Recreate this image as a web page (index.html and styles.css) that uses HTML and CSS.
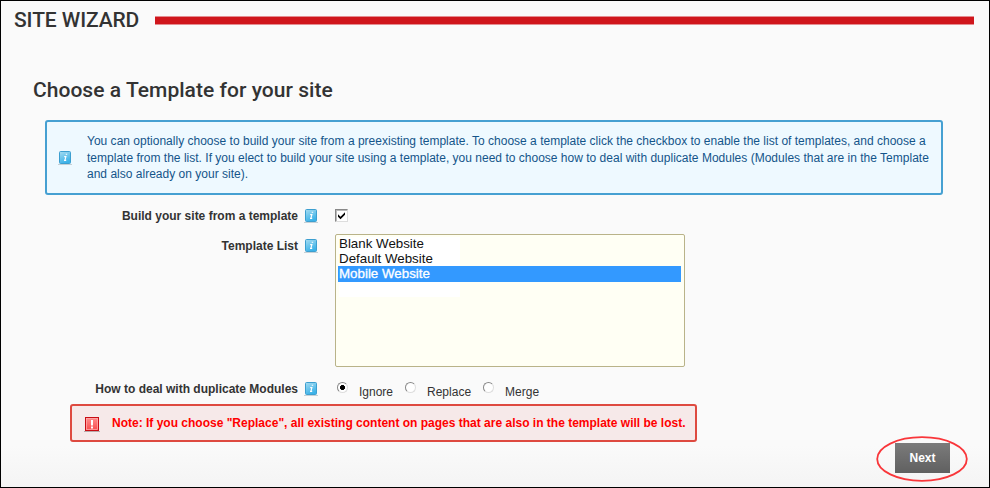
FILE: index.html
```html
<!DOCTYPE html>
<html lang="en">
<head>
<meta charset="utf-8">
<title>Site Wizard</title>
<link rel="stylesheet" href="styles.css">
</head>
<body>
<svg class="defs" width="0" height="0" aria-hidden="true">
  <defs>
    <linearGradient id="blue" x1="0" y1="0" x2="0.4" y2="1"><stop offset="0" stop-color="#a6dcf1"/><stop offset="1" stop-color="#3cb2e8"/></linearGradient>
    <linearGradient id="red" x1="0" y1="0" x2="0" y2="1"><stop offset="0" stop-color="#ff8d8d"/><stop offset="1" stop-color="#f94b4b"/></linearGradient>
    <symbol id="info" viewBox="0 0 14 15">
      <path d="M0 13.5h14" stroke="#c5d0d6"/>
      <rect x="1.5" y="0.5" width="11" height="12" rx="1" fill="url(#blue)" stroke="#3c9fd0"/>
      <path d="M7.7 3.3h1.5M6.2 5.6h1.7L6.9 9.4M6 9.4h2.2" stroke="#fff" stroke-width="1.1" fill="none"/>
    </symbol>
  </defs>
</svg>
<main class="page">
  <header class="top"><h1>SITE WIZARD</h1><div class="bar"></div></header>
  <h2>Choose a Template for your site</h2>
  <section class="info">
    <svg class="icon"><use href="#info"/></svg>
    <p>You can optionally choose to build your site from a preexisting template. To choose a template click the checkbox to enable the list of templates, and choose a<br>template from the list. If you elect to build your site using a template, you need to choose how to deal with duplicate Modules (Modules that are in the Template<br>and also already on your site).</p>
  </section>
  <div class="form">
    <div class="row build">
      <span class="label">Build your site from a template</span>
      <svg class="icon"><use href="#info"/></svg>
      <span class="check"><svg width="9" height="9"><path d="M1 3.2v2.5l2.5 2.5L8 3.7V1.2L3.5 5.7z" fill="#000"/></svg></span>
    </div>
    <div class="row list-row">
      <span class="label">Template List</span>
      <svg class="icon"><use href="#info"/></svg>
      <ul class="list"><li>Blank Website</li><li>Default Website</li><li class="selected">Mobile Website</li></ul>
    </div>
    <div class="row modules">
      <span class="label">How to deal with duplicate Modules</span>
      <svg class="icon"><use href="#info"/></svg>
      <div class="radios">
        <span class="radio on"></span><span class="choice">Ignore</span>
        <span class="radio"></span><span class="choice">Replace</span>
        <span class="radio"></span><span class="choice">Merge</span>
      </div>
    </div>
  </div>
  <section class="note">
    <svg width="16" height="16"><path d="M0 14.5h16" stroke="#b9a9a9"/><rect x="1.5" y="0.5" width="13" height="13" fill="url(#red)" stroke="#c80d14"/><rect x="2.5" y="1.5" width="11" height="11" fill="none" stroke="#ffb0b0" stroke-width=".7"/><path d="M8 3v5.5M8 9.5v2" stroke="#fff" stroke-width="2"/></svg>
    <span>Note: If you choose "Replace", all existing content on pages that are also in the template will be lost.</span>
  </section>
  <footer class="actions">
    <div class="next">Next
      <svg class="ring" width="94" height="48"><ellipse cx="47" cy="24" rx="44.8" ry="21.8" fill="none" stroke="#f9363a" stroke-width="1.8"/></svg>
    </div>
  </footer>
</main>
</body>
</html>
```
FILE: styles.css
```css
* { box-sizing: border-box; }
body { margin: 0; font: 12px/16.5px "Liberation Sans", Arial, sans-serif; color: #333; }
.defs { position: absolute; }
.page { width: 990px; height: 488px; border: 1px solid #000; overflow: hidden; background: linear-gradient(#fafafa 0 445px, #f4f4f4 100%); }
h1, h2 { margin: 0; font-family: Roboto, sans-serif; font-weight: 500; font-size: 21px; line-height: 26px; white-space: nowrap; }
.top { display: flex; align-items: center; height: 38px; padding: 0 15px 0 13px; }
h1 { width: 141px; letter-spacing: -.1px; }
.bar { flex: 1; height: 9px; background: #d0161c; border: solid #e58d91; border-width: 1px 0; }
h2 { margin: 38px 0 0 32px; letter-spacing: .04px; }
.info { display: flex; align-items: flex-start; width: 898px; height: 75px; margin: 17px 0 0 44px; padding: 11px 0 0 11px; background: #eef9ff; border: 2px solid #46a0d2; border-radius: 3px; color: #14558a; }
.icon { width: 14px; height: 15px; flex: none; }
.info .icon { margin-top: 18px; }
.info p { margin: 0 0 0 15px; white-space: nowrap; letter-spacing: .01px; }
.row { display: flex; align-items: flex-start; }
.label { width: 297px; text-align: right; font-weight: bold; white-space: nowrap; }
.row .icon { margin: 1px 17px 0 6px; }
.build { height: 30px; margin-top: 13px; }
.check { width: 13px; height: 13px; margin-top: 1px; padding: 1px; background: #fff; border: 1px solid; border-color: #888 #ddd #ddd #888; box-shadow: inset 1px 1px #bbb; line-height: 0; }
.list-row { height: 143px; }
.list-row .list { margin: -4px 0 0; }
.list { width: 350px; height: 133px; padding: 1px 3px 0 2px; list-style: none; border: 1px solid #b9b389; border-radius: 2px; background: linear-gradient(#fff, #fff) 3px 2px / 121px 60px no-repeat #fffff4; color: #111; font-size: 13.33px; line-height: 15px; }
.list li { padding-left: 1px; }
.list .selected { height: 16px; background: #3399ff; color: #fff; -webkit-text-stroke: .3px #fff; }
.modules { height: 21px; }
.radios { display: flex; }
.radio { width: 11px; height: 11px; margin: 1px 0 0 2px; border: 1px solid; border-color: #888 #ddd #ddd #888; border-radius: 50%; background: #fff; }
.radio.on { background: radial-gradient(circle, #000 0 2.2px, #fff 2.8px); }
.choice { margin: 3px 10px 0 11px; }
.note { display: flex; align-items: center; width: 627px; height: 38px; margin: 2px 0 0 69px; padding-left: 12px; background: #f6e9e9; border: 2px solid #de4a40; border-radius: 3px; color: #f00; font-weight: bold; white-space: nowrap; }
.note svg { margin-top: 4px; }
.note span { margin-left: 12px; }
.actions { display: flex; justify-content: flex-end; padding: 1px 39px 0 0; }
.next { position: relative; width: 55px; height: 30px; background: linear-gradient(#7b7b7b, #606060); color: #fff; font-weight: bold; text-align: center; line-height: 30px; }
.ring { position: absolute; left: -20.5px; top: -8.5px; }
```
